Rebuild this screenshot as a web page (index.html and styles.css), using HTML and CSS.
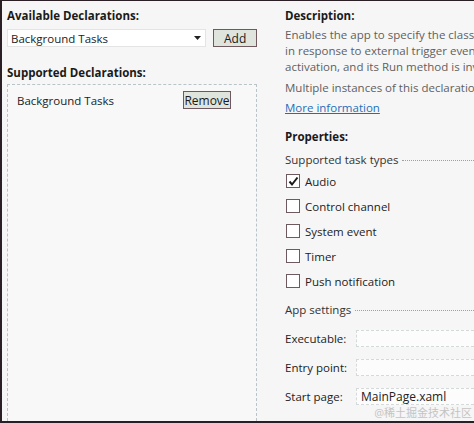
FILE: index.html
```html
<!DOCTYPE html>
<html>
<head>
<meta charset="utf-8">
<link rel="stylesheet" href="styles.css">
</head>
<body>
<div class="frame">
  <div class="left">
    <div class="heading">Available Declarations:</div>
    <div class="pick-row">
      <div class="combo">
        <span>Background Tasks</span>
        <svg class="arrow" width="7" height="4" viewBox="0 0 7 4"><path d="M0 0H7L3.5 4Z" fill="#222"/></svg>
      </div>
      <div class="btn add">Add</div>
    </div>
    <div class="heading supported">Supported Declarations:</div>
    <div class="list">
      <div class="list-item">
        <span>Background Tasks</span>
        <div class="btn remove">Remove</div>
      </div>
    </div>
  </div>
  <div class="right">
    <div class="heading">Description:</div>
    <p class="desc">Enables the app to specify the class name of a background task that runs<br>in response to external trigger events, such as system events. The class<br>activation, and its Run method is invoked when the event is triggered.</p>
    <p class="desc multi">Multiple instances of this declaration are allowed in each app.</p>
    <a class="more" href="#">More information</a>
    <div class="heading props">Properties:</div>
    <div class="group-title"><span>Supported task types</span><i class="rule"></i></div>
    <ul class="checks">
      <li><span class="box checked"><svg width="11" height="11" viewBox="0 0 11 11"><path d="M1.5 5.5L4 8.5L9.5 1.5" fill="none" stroke="#1a1a1a" stroke-width="2"/></svg></span>Audio</li>
      <li><span class="box"></span>Control channel</li>
      <li><span class="box"></span>System event</li>
      <li><span class="box"></span>Timer</li>
      <li><span class="box"></span>Push notification</li>
    </ul>
    <div class="group-title app"><span>App settings</span><i class="rule"></i></div>
    <div class="fields">
      <div class="field"><label>Executable:</label><div class="input"></div></div>
      <div class="field"><label>Entry point:</label><div class="input"></div></div>
      <div class="field"><label>Start page:</label><div class="input">MainPage.xaml</div></div>
    </div>
  </div>
  <div class="watermark">@稀土掘金技术社区</div>
</div>
</body>
</html>
```
FILE: styles.css
```css
html, body {
  margin: 0;
  padding: 0;
}
body {
  width: 474px;
  height: 423px;
  overflow: hidden;
  background: #f6f6f6;
  font-family: "Open Sans", "Noto Sans CJK SC", sans-serif;
  font-size: 11.5px;
  color: #222;
}
.frame {
  position: relative;
  box-sizing: border-box;
  width: 474px;
  height: 423px;
  border-top: 1px solid #2a1f24;
  border-left: 2px solid #2a1f24;
  border-bottom: 2px solid #2a1f24;
  display: grid;
  grid-template-columns: 255px 1fr;
  column-gap: 28px;
  overflow: hidden;
}
.heading {
  font-weight: 700;
  line-height: 16px;
  height: 16px;
  color: #1a1a1a;
}
.left {
  padding: 7px 0 0 5px;
  display: flex;
  flex-direction: column;
  min-height: 0;
}
.pick-row {
  display: flex;
  gap: 7px;
  margin-top: 5px;
}
.combo {
  box-sizing: border-box;
  width: 200px;
  height: 18px;
  background: #fff;
  border: 1px solid #e4e4e4;
  display: flex;
  align-items: center;
  justify-content: space-between;
  padding: 0 4px 0 3px;
}
.btn {
  box-sizing: border-box;
  height: 18px;
  background: #dfe5dd;
  border: 1px solid #6e5a5e;
  display: flex;
  align-items: center;
  justify-content: center;
  color: #1a1a1a;
}
.add {
  width: 44px;
  font-size: 12px;
}
.supported {
  margin-top: 18px;
}
.list {
  flex: 1;
  margin-top: 3px;
  width: 250px;
  box-sizing: border-box;
  border: 1px dashed #b8c4c8;
  border-bottom: none;
  background: #f8f8f8;
  padding: 6px 0 0 9px;
}
.list-item {
  display: flex;
  align-items: center;
}
.list-item span {
  width: 166px;
}
.remove {
  width: 48px;
  height: 18px;
  font-size: 12px;
}
.right {
  padding-top: 7px;
  min-width: 0;
  white-space: nowrap;
}
.desc {
  margin: 3px 0 0;
  line-height: 16px;
  color: #5f5f5f;
}
.desc.multi {
  margin-top: 5px;
}
.more {
  display: block;
  margin-top: 4px;
  line-height: 16px;
  color: #1f6fb8;
  text-decoration: underline;
  width: max-content;
}
.props {
  margin-top: 13px;
}
.group-title {
  display: flex;
  align-items: center;
  margin-top: 7px;
  line-height: 16px;
  color: #333;
}
.group-title .rule {
  flex: 1;
  border-top: 1px dotted #a0a0a0;
  margin-left: 4px;
  margin-top: 1px;
}
.checks {
  list-style: none;
  margin: 5px 0 0;
  padding: 0 0 0 1px;
  display: flex;
  flex-direction: column;
  gap: 9px;
}
.checks li {
  display: flex;
  align-items: center;
  height: 16px;
  color: #222;
}
.box {
  box-sizing: border-box;
  width: 14px;
  height: 14px;
  border: 1px solid #6e5a5e;
  background: #fff;
  margin-right: 5px;
  display: flex;
  align-items: center;
  justify-content: center;
}
.group-title.app {
  margin-top: 13px;
}
.fields {
  margin-top: 12px;
  display: flex;
  flex-direction: column;
  gap: 12px;
}
.field {
  display: flex;
  align-items: center;
  height: 17px;
}
.field label {
  width: 71px;
  color: #222;
}
.input {
  flex: 1;
  box-sizing: border-box;
  height: 17px;
  border: 1px dashed #d4dada;
  border-right: none;
  background: #fcfcfc;
  padding-left: 4px;
  line-height: 15px;
  font-size: 12px;
}
.watermark {
  position: absolute;
  right: 2px;
  bottom: 1px;
  font-size: 11px;
  color: #c4c4c4;
  line-height: 14px;
}
```
